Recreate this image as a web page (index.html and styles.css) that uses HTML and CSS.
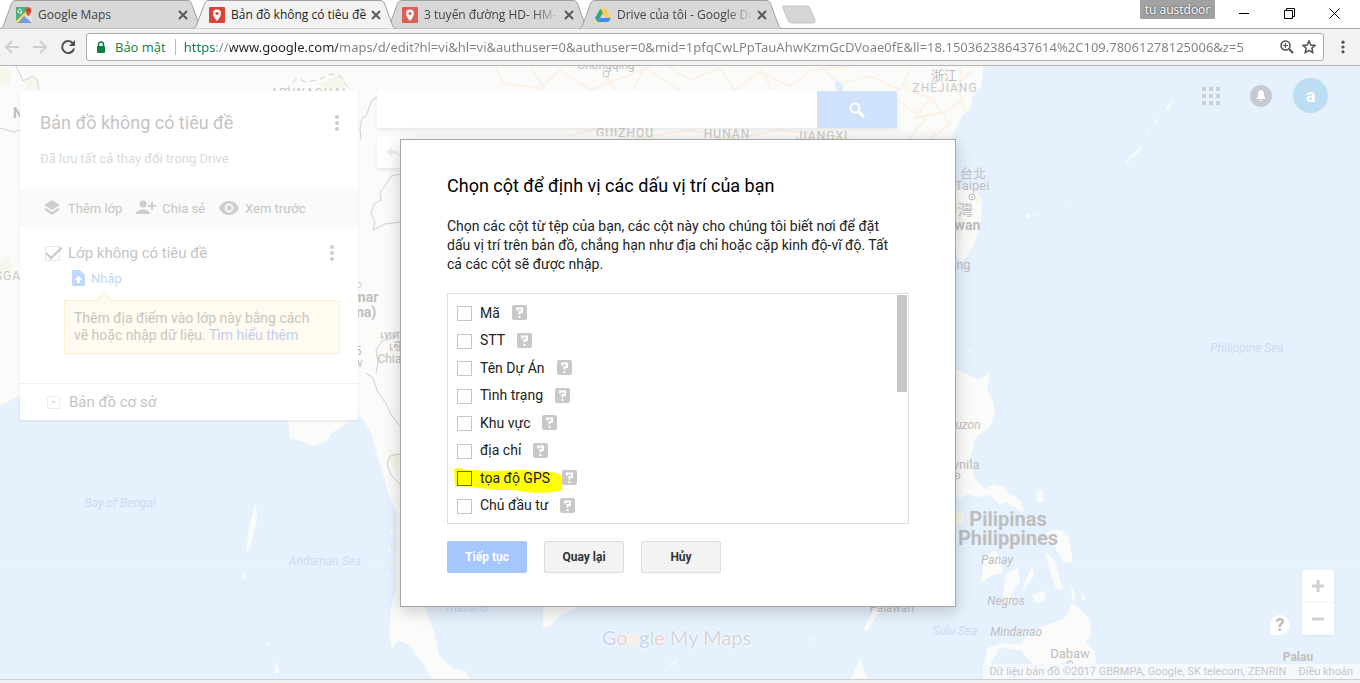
FILE: index.html
```html
<!DOCTYPE html>
<html lang="vi">

<head>
	<meta charset="utf-8">
	<title>Bản đồ không có tiêu đề</title>
	<link rel="stylesheet" href="styles.css">
</head>

<body>
	<svg class="defs" aria-hidden="true">
		<symbol id="i-tab" viewBox="0 0 203 29" preserveAspectRatio="none">
			<path d="M0 28.500 C2 28 3 27 4 24 L11 5 C12 2 13 .5 16 .5 H187 C190 .5 191 2 192 5 L199 24 C200 27 201 28 203 28.500" />
		</symbol>
		<symbol id="i-close" viewBox="0 0 10 10">
			<path d="M1 1 L9 9 M9 1 L1 9" fill="none" stroke="#5a5a5a" stroke-width="2" />
		</symbol>
		<symbol id="i-pin" viewBox="0 0 16 16">
			<rect width="16" height="16" rx="1" fill="#db4437" />
			<path d="M8 2.500 a4 4 0 0 0 -4 4 c0 3 4 7.500 4 7.500 s4 -4.500 4 -7.500 a4 4 0 0 0 -4 -4z" fill="#fff" />
			<circle cx="8" cy="6.500" r="1.500" fill="#db4437" />
		</symbol>
		<symbol id="i-dots" viewBox="0 0 6 20">
			<circle cx="3" cy="4" r="2" /><circle cx="3" cy="10" r="2" /><circle cx="3" cy="16" r="2" />
		</symbol>
		<symbol id="i-help" viewBox="0 0 15 15">
			<rect width="15" height="15" rx="2" fill="#c8c8c8" />
			<path d="M5 5.500 V3.500 H10 V7 H7.500 V9.500 M7.500 11 V13" fill="none" stroke="#fff" stroke-width="2" />
		</symbol>
	</svg>

	<header class="browser">
		<div class="tabstrip">
			<div class="tab">
				<svg class="tab_bg"><use href="#i-tab" /></svg>
				<svg class="favicon" viewBox="0 0 16 16">
					<rect width="16" height="16" rx="1" fill="#4caf78" />
					<path d="M8 8 L16 0 V16 H11z" fill="#e3e3e3" />
					<path d="M0 14 L14 0 H16 V2 L2 16 H0z" fill="#f5d36b" />
					<path d="M8 9 L16 16 H2z" fill="#6f9bf0" />
					<path d="M12.500 .5 a3 3 0 0 0 -3 3 c0 2.500 3 6 3 6 s3 -3.500 3 -6 a3 3 0 0 0 -3 -3z" fill="#d9534a" />
					<circle cx="12.500" cy="3.500" r="1" fill="#8c2a22" />
					<path d="M5.500 3 a2 2 0 1 0 .5 1.500 H4.500" fill="none" stroke="#fff" stroke-width="1" />
				</svg>
				<span class="tab_title">Google Maps</span>
				<button class="tab_close" aria-label="Đóng"><svg><use href="#i-close" /></svg></button>
			</div>
			<div class="tab active">
				<svg class="tab_bg"><use href="#i-tab" /></svg>
				<svg class="favicon"><use href="#i-pin" /></svg>
				<span class="tab_title">Bản đồ không có tiêu đề</span>
				<button class="tab_close" aria-label="Đóng"><svg><use href="#i-close" /></svg></button>
			</div>
			<div class="tab">
				<svg class="tab_bg"><use href="#i-tab" /></svg>
				<svg class="favicon pale"><use href="#i-pin" /></svg>
				<span class="tab_title fade">3 tuyến đường HD- HM- HN</span>
				<button class="tab_close" aria-label="Đóng"><svg><use href="#i-close" /></svg></button>
			</div>
			<div class="tab">
				<svg class="tab_bg"><use href="#i-tab" /></svg>
				<svg class="favicon" viewBox="0 0 16 16">
					<path d="M5.500 1.500 L0 11 L2.700 15 L8 5.800z" fill="#3aa76d" />
					<path d="M5.500 1.500 H10.500 L16 11 H10.700z" fill="#fbcf4a" />
					<path d="M5.300 11 H16 L13.300 15 H2.700z" fill="#4688f4" />
				</svg>
				<span class="tab_title fade">Drive của tôi - Google Drive</span>
				<button class="tab_close" aria-label="Đóng"><svg><use href="#i-close" /></svg></button>
			</div>
			<button class="new_tab" aria-label="Thẻ mới">
				<svg viewBox="0 0 36 19"><path d="M3 1 H26 Q28 1 29 3 L34 15 Q35 18 32 18 H11 Q8 18 7 15 L2 3 Q1 1 3 1z" fill="#d6d6d6" stroke="#c4c4c4" /></svg>
			</button>
			<div class="window_buttons">
				<span class="user_name">tu austdoor</span>
				<button aria-label="Thu nhỏ"><svg viewBox="0 0 11 11"><path d="M0 5.500 H10" /></svg></button>
				<button aria-label="Khôi phục"><svg viewBox="0 0 11 11"><path d="M.5 2.500 H8.500 V10.500 H.5z M2.500 2.500 V.5 H10.500 V8.500 H8.500" /></svg></button>
				<button aria-label="Đóng cửa sổ"><svg viewBox="0 0 11 11"><path d="M.5 .5 L10.500 10.500 M10.500 .5 L.5 10.500" /></svg></button>
			</div>
		</div>

		<div class="toolbar">
			<button class="nav_btn" aria-label="Quay lại trang trước"><svg viewBox="0 0 16 16"><path d="M15 8 H2 M8 2 L2 8 L8 14" fill="none" stroke="#cfcfcf" stroke-width="2" /></svg></button>
			<button class="nav_btn" aria-label="Trang sau"><svg viewBox="0 0 16 16"><path d="M1 8 H14 M8 2 L14 8 L8 14" fill="none" stroke="#cfcfcf" stroke-width="2" /></svg></button>
			<button class="nav_btn" aria-label="Tải lại"><svg viewBox="0 0 16 16"><path d="M13 4.500 A6 6 0 1 0 14 9.500" fill="none" stroke="#505050" stroke-width="2" /><path d="M15 1 V7 H9z" fill="#505050" /></svg></button>
			<div class="omnibox">
				<svg class="lock" viewBox="0 0 10 13"><path d="M2.500 6 V3.500 a2.500 2.500 0 0 1 5 0 V6" fill="none" stroke="#0b8043" stroke-width="1.500" /><rect x="1" y="5" width="8" height="7" rx="1" fill="#0b8043" /></svg>
				<label class="secure" for="url">Bảo mật</label>
				<input class="url" id="url" type="text" value="https://www.google.com/maps/d/edit?hl=vi&amp;hl=vi&amp;authuser=0&amp;authuser=0&amp;mid=1pfqCwLPpTauAhwKzmGcDVoae0fE&amp;ll=18.150362386437614%2C109.78061278125006&amp;z=5">
				<button class="box_btn" aria-label="Thu phóng"><svg viewBox="0 0 14 14"><g fill="none" stroke="#505050"><circle cx="5.500" cy="5.500" r="4.500" stroke-width="1.500" /><path d="M9 9 L13 13" stroke-width="2" /><path d="M3 5.500 H8 M5.500 3 V8" /></g></svg></button>
				<button class="box_btn" aria-label="Đánh dấu"><svg viewBox="0 0 14 14"><path d="M7 1 L8.800 5 L13 5.400 L9.900 8.300 L10.800 12.600 L7 10.400 L3.200 12.600 L4.100 8.300 L1 5.400 L5.200 5z" fill="none" stroke="#505050" stroke-width="1.500" /></svg></button>
			</div>
			<button class="menu_btn" aria-label="Trình đơn"><svg fill="#505050"><use href="#i-dots" /></svg></button>
		</div>
	</header>

	<main class="map">
		<svg class="canvas" viewBox="0 66 1360 613" preserveAspectRatio="xMidYMid slice">
			<!-- land -->
			<g class="land">
				<path d="M0 66 H983 L981 88 L973 96 L971 108 L962 116 L957 128 L950 140 L900 240 L700 300 L730 420 L640 560 L577 608 L562 614 L549 627 L543 628 L543 600 L480 560 L420 540 L424 600 L428 616 L434 632 L439 655 L453 668 L467 672 L470 679 H432 L424 665 L409 645 L398 640 L392 649 L389 634 L391 607 L396 590 L397 512 L388 494 L383 474 L376 452 L371 432 L363 420 L358 414 L345 424 L333 432 L325 442 L313 446 L303 442 L290 438 L288 420 L200 400 L100 380 L40 388 L20 396 L0 405z" />
				<path d="M956 190 Q972 184 981 198 Q984 216 977 236 Q972 252 962 262 L950 250z" />
				<path d="M945 368 L960 371 L978 379 L990 374 L987 388 L993 402 L995 413 L989 428 L977 436 L970 448 L969 462 L975 479 L985 489 L993 484 L1004 487 L1010 494 L1020 500 L1024 512 L1015 508 L1006 502 L1000 505 L989 495 L978 497 L967 494 L960 500 L950 490z" />
				<path d="M1036 492 L1043 490 L1043 502 L1037 502z M1045 533 Q1060 526 1068 535 L1071 551 L1073 563 L1064 562 L1057 551z M1045 552 L1055 560 L1060 580 L1063 590 L1056 588 L1050 572z M985 556 L995 550 L1002 564 L1003 572 L991 576 L981 583z M1006 574 L1018 568 L1020 582 L1012 592 L1009 606 L1003 596z M1032 566 L1034 576 L1022 592 L1024 584z M1031 595 L1044 591 L1046 600 L1037 604z M1071 584 L1076 596 L1072 602z M1082 592 L1086 600 L1082 600z" />
				<path d="M1072 603 L1082 611 L1090 620 L1091 634 L1086 642 L1095 652 L1097 679 H1080 L1070 660 L1040 672 L1020 650 L1000 648 L990 664 L984 670 L987 648 L1002 643 L1020 644 L1030 632 L1046 625 L1064 619z" />
				<path d="M886 607 L877 616 L866 632 L864 628 L873 611z M851 679 L860 658 L867 679z M256 502 L257 520 L251 545 L246 553 L249 525z M244 571 L246 579 L241 579z M275 662 L280 671 L275 674z M268 641 L271 645 L266 646z" />
				<path d="M1168 105 L1173 101 L1170 108 L1164 112z M1156 117 L1158 124 L1155 122z M1138 149 L1142 146 L1139 154 L1130 158 L1127 167 L1126 161z M1026 214 l4 1 l-2 3 l-3 -1z M1036 213 l3 1 l-2 2z M1066 203 l2 2 l-3 1z M1147 131 l2 2 l-2 1z M968 350 l3 1 l-2 2z" />
				<path d="M391 528 l2 8 l-3 -2z M389 546 l2 6 l-3 1z M388 572 l2 4 l-2 1z M670 664 l9 -5 l-3 4 l-5 3z M811 639 l4 -1 l-2 3z M955 450 l7 1 l4 -8 l8 2 l-3 10 l-10 6z" />
			</g>
			<!-- forest tint -->
			<g fill="#f3f8ea">
				<path d="M0 66 L12 70 L10 84 L0 88z M26 80 L36 78 L38 90 L26 90z M318 84 L342 74 L346 88 L326 90z M0 262 L8 256 L14 270 L0 276z M956 510 l8 2 l0 12 l-10 2z M390 450 l9 6 v20 l-8 -10z M956 200 q12 14 2 50z" />
			</g>
			<!-- roads -->
			<g class="roads">
				<path d="M495 66 L505 84 L540 88 L560 70 L590 90 L622 78 L650 66 M530 66 L545 90 M600 66 L616 90 M632 90 L645 68 L680 90 M668 66 L690 80 L720 68 L735 90 L760 72 L790 86 L812 70 L850 66 M760 66 L772 90 M820 66 L840 84 L870 76 L900 90 L912 66 M905 88 L930 98 L915 118 L945 112 L962 100 M897 100 L925 120 L910 138 M930 96 L950 124 L930 139 M560 138 L600 128 L640 138 L690 130 L730 139 L780 130 L850 138 M940 66 L955 88 L970 72" />
				<path d="M962 66 Q956 90 966 112 M968 196 Q976 192 978 204" />
			</g>
			<!-- country and state borders -->
			<g class="borders">
				<path d="M16 66 L23 81 L33 76 L37 80 L39 90 M0 128 L14 132 L20 130 M377 97 L372 100 L366 116 L362 118 L360 128 L361 140 M400 174 L391 176 L385 186 L380 192 L381 200 L374 204 L371 214 L375 222 L373 230 L385 224 L400 222 M366 373 L373 378 L377 390 L386 404 L392 416 L400 426 M376 373 L378 362 L376 350 L382 341 L392 338 M400 454 L390 456 L387 464 L391 475 L400 484" />
				<path d="M286 90 L297 78 L305 82 L318 80 L330 74 L340 76 L350 90" stroke-dasharray="6 4" />
			</g>
			<path d="M0 563.500 H1360" stroke="#f0f4fa" />
			<path d="M836 80 l8 6 l-3 8 l-6 -6z" fill="#deebfb" />
			<!-- labels -->
			<g class="labels">
				<text x="944" y="80" font-size="13">浙江</text>
				<text class="prov" x="945" y="92">ZHEJIANG</text>
				<text class="prov" x="625" y="137">GUIZHOU</text>
				<text class="prov" x="727" y="138">HUNAN</text>
				<text class="prov" x="822" y="140">JIANGXI</text>
				<text x="606" y="69" font-size="12">Chongqing</text>
				<circle cx="606" cy="74" r="3" fill="none" stroke="#c4c4c4" />
				<text class="prov" x="310" y="97">ARUNACHAL</text>
				<text class="country" x="18" y="118">N</text>
				<text class="prov" x="8" y="280">SGA</text>
				<text class="country" x="362" y="302">nmar</text>
				<text class="country" x="364" y="317">ma)</text>
				<text x="359" y="288" font-size="13">ဝ</text>
				<text x="358" y="355" font-size="12">5</text>
				<text x="358" y="367" font-size="12">w</text>
				<text x="390" y="339" font-size="12">เทศ</text>
				<text x="398" y="351" font-size="12">เชีย</text>
				<text x="396" y="363" font-size="12">Chiang</text>
				<text x="973" y="178" font-size="13">台北</text>
				<text x="972" y="190" font-size="13">Taipei</text>
				<circle cx="972" cy="197" r="3" fill="#fff" stroke="#b8b8b8" />
				<circle cx="972" cy="197" r="1" />
				<text x="958" y="215" font-size="15">台灣</text>
				<text class="country" x="958" y="230">Taiwan</text>
				<text x="940" y="269" font-size="13">Kaohsiung</text>
				<text class="island" x="965" y="429">Luzon</text>
				<text x="957" y="469" font-size="13">Maynila</text>
				<circle cx="957" cy="476" r="3" fill="#fff" stroke="#b8b8b8" />
				<circle cx="957" cy="476" r="1" />
				<text class="big" x="1008" y="526">Pilipinas</text>
				<text class="big" x="1008" y="545">Philippines</text>
				<text class="island" x="997" y="564">Panay</text>
				<text class="island" x="1006" y="605">Negros</text>
				<text class="island" x="1016" y="636">Mindanao</text>
				<text class="island" x="892" y="612">Palawan</text>
				<text x="1070" y="658" font-size="13">Dabaw</text>
				<circle cx="1070" cy="664" r="3" fill="none" stroke="#c4c4c4" />
				<text class="palau" x="1298" y="661">Palau</text>
				<text class="sea" x="1247" y="352">Philippine Sea</text>
				<text class="sea" x="955" y="635">Sulu Sea</text>
				<text class="sea" x="120" y="507">Bay of Bengal</text>
				<text class="sea" x="325" y="565">Andaman Sea</text>
				<text class="sea" x="466" y="612">Thailand</text>
			</g>
		</svg>

		<div class="map_ui">
			<section class="panel">
				<div class="panel_head">
					<h1>Bản đồ không có tiêu đề</h1>
					<button class="dots" aria-label="Tùy chọn bản đồ"><svg><use href="#i-dots" /></svg></button>
				</div>
				<p class="saved">Đã lưu tất cả thay đổi trong Drive</p>
				<div class="actions">
					<button><svg viewBox="0 0 20 16"><path d="M10 0 L18 5 L10 10 L2 5z M4 8 L10 12 L16 8 L18 9.500 L10 15 L2 9.500z" /></svg>Thêm lớp</button>
					<button><svg viewBox="0 0 20 16"><circle cx="7" cy="4" r="3.500" /><path d="M0 14 C0 8 14 8 14 14z M15 2 H17 V5 H20 V7 H17 V10 H15 V7 H12 V5 H15z" /></svg>Chia sẻ</button>
					<button><svg viewBox="0 0 20 16"><path fill-rule="evenodd" d="M10 1 C5 1 1.500 4.500 0 8 C1.500 11.500 5 15 10 15 C15 15 18.500 11.500 20 8 C18.500 4.500 15 1 10 1z M10 3.500 a4.500 4.500 0 1 1 0 9 a4.500 4.500 0 1 1 0 -9z" /><circle cx="10" cy="8" r="2.500" /></svg>Xem trước</button>
				</div>
				<div class="layer">
					<div class="layer_head">
						<input type="checkbox" id="layer1" class="layer_cb" checked>
						<label for="layer1">Lớp không có tiêu đề</label>
						<button class="dots" aria-label="Tùy chọn lớp"><svg><use href="#i-dots" /></svg></button>
					</div>
					<button class="import"><svg viewBox="0 0 13 16"><path d="M1 0 H8 L13 5 V16 H1 Q0 16 0 15 V1 Q0 0 1 0z" fill="#c3d9fb" /><path d="M6.500 6 L10.500 10 H8 V13 H5 V10 H2.500z" fill="#fff" /></svg>Nhập</button>
					<div class="tip">Thêm địa điểm vào lớp này bằng cách vẽ hoặc nhập dữ liệu. <a href="#">Tìm hiểu thêm</a></div>
				</div>
				<button class="basemap"><svg viewBox="0 0 13 13"><rect x=".5" y=".5" width="12" height="12" rx="1" fill="none" stroke="#ececec" /><path d="M4 5 H9 L6.500 8z" fill="#dcdcdc" /></svg>Bản đồ cơ sở</button>
			</section>

			<div class="middle">
				<form class="search">
					<input type="text" aria-label="Tìm kiếm">
					<button type="button" aria-label="Tìm"><svg viewBox="0 0 16 16"><circle cx="6" cy="6" r="4.500" fill="none" stroke="#fff" stroke-width="2" /><path d="M9 9 L15 15" stroke="#fff" stroke-width="3" /></svg></button>
				</form>
				<div class="edit_bar">
					<button aria-label="Hoàn tác"><svg viewBox="0 0 16 16"><path d="M7 3 L1 8 L7 13 V10 Q12 9 15 13 Q14 6 7 6z" fill="#efefef" /></svg></button>
				</div>
			</div>

			<div class="account">
				<button aria-label="Ứng dụng"><svg width="18" height="18" viewBox="0 0 18 18"><path d="M0 0h4v4h-4z M7 0h4v4h-4z M14 0h4v4h-4z M0 7h4v4h-4z M7 7h4v4h-4z M14 7h4v4h-4z M0 14h4v4h-4z M7 14h4v4h-4z M14 14h4v4h-4z" fill="#c9ced6" /></svg></button>
				<button aria-label="Thông báo"><svg width="22" height="22" viewBox="0 0 22 22"><circle cx="11" cy="11" r="11" fill="#c6cad1" /><path d="M11 5 C8 5.500 8 8 8 11 L6.500 14 H15.500 L14 11 C14 8 14 5.500 11 5z M9.500 15 H12.500 Q11 17.500 9.500 15z" fill="#fff" /></svg></button>
				<button class="avatar">a</button>
			</div>
		</div>

		<div class="map_logo"><span class="g1">G</span><span class="g2">o</span><span class="g3">o</span><span class="g1">g</span><span class="g4">l</span><span class="g2">e</span> My Maps</div>

		<div class="map_controls">
			<button class="help" aria-label="Trợ giúp">?</button>
			<div class="zoom">
				<button aria-label="Phóng to"><svg viewBox="0 0 12 12"><path d="M6 0 V12 M0 6 H12" /></svg></button>
				<button aria-label="Thu nhỏ bản đồ"><svg viewBox="0 0 12 12"><path d="M0 6 H12" /></svg></button>
			</div>
		</div>
		<div class="attribution"><span>Dữ liệu bản đồ ©2017 GBRMPA, Google, SK telecom, ZENRIN</span><a href="#">Điều khoản</a></div>

		<div class="overlay">
			<form class="dialog" role="dialog" aria-labelledby="dlg_title">
				<h2 id="dlg_title">Chọn cột để định vị các dấu vị trí của bạn</h2>
				<p>Chọn các cột từ tệp của bạn, các cột này cho chúng tôi biết nơi để đặt dấu vị trí trên bản đồ, chẳng hạn như địa chỉ hoặc cặp kinh độ-vĩ độ. Tất cả các cột sẽ được nhập.</p>
				<div class="columns">
					<div class="row"><input type="checkbox" id="c1"><label for="c1">Mã</label><svg class="q"><use href="#i-help" /></svg></div>
					<div class="row"><input type="checkbox" id="c2"><label for="c2">STT</label><svg class="q"><use href="#i-help" /></svg></div>
					<div class="row"><input type="checkbox" id="c3"><label for="c3">Tên Dự Án</label><svg class="q"><use href="#i-help" /></svg></div>
					<div class="row"><input type="checkbox" id="c4"><label for="c4">Tình trạng</label><svg class="q"><use href="#i-help" /></svg></div>
					<div class="row"><input type="checkbox" id="c5"><label for="c5">Khu vực</label><svg class="q"><use href="#i-help" /></svg></div>
					<div class="row"><input type="checkbox" id="c6"><label for="c6">địa chỉ</label><svg class="q"><use href="#i-help" /></svg></div>
					<div class="row marked">
						<svg class="marker" viewBox="0 0 108 26"><path d="M0 1 L6 0 L12 2 L40 3 L70 2 L98 4 L106 6 L108 10 V22 L100 24 L84 25 L72 24 L60 22 L44 22 L24 20 L8 18 L1 19z" fill="#ff0" /></svg>
						<input type="checkbox" id="c7"><label for="c7">tọa độ GPS</label><svg class="q"><use href="#i-help" /></svg>
					</div>
					<div class="row"><input type="checkbox" id="c8"><label for="c8">Chủ đầu tư</label><svg class="q"><use href="#i-help" /></svg></div>
					<div class="thumb"></div>
				</div>
				<div class="buttons">
					<button type="button" class="primary">Tiếp tục</button>
					<button type="button">Quay lại</button>
					<button type="button">Hủy</button>
				</div>
			</form>
		</div>
	</main>
</body>

</html>
```

FILE: styles.css
```css
* {
	box-sizing: border-box;
	margin: 0;
	padding: 0;
}

body {
	display: flex;
	flex-direction: column;
	height: 100vh;
	overflow: hidden;
	background: #f0f1f2;
	font-family: Roboto, "Liberation Sans", "Noto Sans CJK TC", sans-serif;
	font-size: 14px;
}

button {
	border: none;
	background: none;
	font-family: inherit;
}

a {
	text-decoration: none;
}

svg {
	display: block;
}

.defs {
	position: absolute;
	width: 0;
	height: 0;
}

/* browser */
.browser {
	font-family: "Open Sans", "Noto Sans", sans-serif;
	background: #f2f2f2;
	border-bottom: 1px solid #b4b4b4;
}

.tabstrip {
	display: flex;
	height: 29px;
	background: linear-gradient(#a9a9a9, #a9a9a9) bottom / 100% 1px no-repeat #fff;
}

.tab {
	position: relative;
	display: flex;
	align-items: center;
	width: 203px;
	height: 29px;
	padding: 0 15px 0 16px;
	font-size: 12px;
	color: #444;
}

.tab + .tab {
	margin-left: -10px;
}

.tab_bg {
	position: absolute;
	left: 0;
	top: 0;
	width: 100%;
	height: 100%;
	fill: #d8d8d8;
	stroke: #a0a0a0;
}

.active {
	z-index: 1;
	color: #222;
}

.active .tab_bg {
	fill: #f2f2f2;
}

.favicon {
	position: relative;
	width: 16px;
	height: 16px;
	flex: none;
}

.pale {
	opacity: 0.8;
}

.tab_title {
	position: relative;
	flex: 1;
	margin: 0 4px 0 6px;
	overflow: hidden;
	white-space: nowrap;
}

.fade {
	-webkit-mask-image: linear-gradient(90deg, #000 80%, transparent);
	mask-image: linear-gradient(90deg, #000 80%, transparent);
}

.tab_close {
	position: relative;
}

.tab_close svg {
	width: 10px;
	height: 10px;
}

.new_tab {
	align-self: center;
	margin-left: -1px;
}

.new_tab svg {
	width: 36px;
	height: 19px;
}

.window_buttons {
	display: flex;
	align-items: center;
	height: 26px;
	margin-left: auto;
	padding-right: 20px;
	gap: 34px;
}

.window_buttons svg {
	width: 11px;
	height: 11px;
	fill: none;
	stroke: #000;
}

.user_name {
	align-self: flex-start;
	width: 75px;
	margin-right: -10px;
	background: #a2a2a2;
	color: #fff;
	font-size: 12px;
	line-height: 19px;
	text-align: center;
	text-shadow: 0 0 2px #333;
}

.toolbar {
	display: flex;
	align-items: center;
	height: 36px;
	padding: 0 14px 0 4px;
}

.nav_btn {
	width: 28px;
}

.nav_btn svg {
	width: 16px;
	height: 16px;
}

.omnibox {
	display: flex;
	align-items: center;
	flex: 1;
	height: 28px;
	margin: 0 16px 0 -2px;
	padding: 0 7px 0 9px;
	background: #fff;
	border: 1px solid #adadad;
	border-radius: 3px;
}

.lock {
	width: 10px;
	height: 13px;
}

.secure {
	margin-left: 9px;
	padding-right: 9px;
	border-right: 1px solid #bbb;
	color: #0b8043;
	font-size: 13px;
	line-height: 16px;
}

/* scheme green, host black, the rest grey */
.url {
	flex: 1;
	min-width: 0;
	margin: 0 6px 0 8px;
	border: none;
	outline: none;
	font-family: "Noto Sans", sans-serif;
	font-size: 13px;
	color: transparent;
	background: linear-gradient(90deg, #0b8043 32px, #888 32px, #888 46px, #222 46px, #222 154px, #808080 154px);
	-webkit-background-clip: text;
	background-clip: text;
}

.box_btn {
	margin-left: 8px;
}

.url + .box_btn {
	margin-left: 0;
}

.box_btn svg {
	width: 14px;
	height: 14px;
}

.menu_btn svg {
	width: 6px;
	height: 16px;
}

/* map */
.map {
	position: relative;
	flex: 1;
	margin-bottom: 3px;
	border-bottom: 1px solid #ccd0d6;
	background: #e6f1fe;
	overflow: hidden;
}

.canvas {
	position: absolute;
	width: 100%;
	height: 100%;
}

.land {
	fill: #fbfbf9;
}

.roads {
	fill: none;
	stroke: #fcf1e4;
	stroke-width: 2;
}

.borders {
	fill: none;
	stroke: #cfcfcf;
}

.labels {
	fill: #bebebe;
	text-anchor: middle;
	font-size: 12px;
}

.prov {
	letter-spacing: 1px;
	fill: #c8c8c8;
}

.country {
	font-weight: bold;
	font-size: 14px;
}

.palau {
	font-weight: bold;
}

.big {
	font-weight: bold;
	font-size: 20px;
}

.island {
	font-style: italic;
}

.sea {
	font-style: italic;
	fill: #cddaf0;
}

.map_ui {
	position: absolute;
	left: 0;
	right: 0;
	top: 0;
	display: flex;
	align-items: flex-start;
	padding: 25px 32px 0 20px;
}

.panel {
	width: 338px;
	background: #fff;
	border-radius: 2px;
	box-shadow: 0 1px 3px rgba(0, 0, 0, 0.08);
	color: #c4c4c4;
}

.dots svg {
	width: 6px;
	height: 20px;
	fill: #cdcdcd;
}

.panel_head {
	display: flex;
	justify-content: space-between;
	align-items: center;
	padding: 20px 18px 0 20px;
}

.panel_head h1 {
	font-size: 18px;
	font-weight: normal;
	line-height: 24px;
}

.saved {
	padding: 14px 20px 19px;
	font-size: 13px;
	line-height: 20px;
	color: #dadada;
}

.actions {
	display: flex;
	align-items: center;
	gap: 14px;
	height: 40px;
	padding: 0 22px;
	background: #fafafa;
}

.actions button {
	display: flex;
	align-items: center;
	gap: 6px;
	font-size: 13px;
	color: #c4c4c4;
}

.actions svg {
	width: 20px;
	height: 16px;
	fill: #cdcdcd;
}

.layer {
	padding: 15px 18px 29px 25px;
	border-bottom: 1px solid #f1f1f1;
}

.layer_head {
	display: flex;
	align-items: center;
	gap: 8px;
	height: 20px;
	padding-right: 5px;
	font-size: 15px;
}

.layer_head label {
	flex: 1;
}

.layer_cb {
	appearance: none;
	width: 15px;
	height: 15px;
	border: 1px solid #e6e6e6;
}

.layer_cb:checked::before {
	content: "";
	display: block;
	width: 14px;
	height: 6px;
	border: solid #c8c8c8;
	border-width: 0 0 2px 2px;
	transform: rotate(-45deg);
}

.import {
	display: flex;
	align-items: center;
	gap: 6px;
	margin: 7px 0 0 27px;
	font-size: 13px;
	color: #c3d6f8;
}

.import svg {
	width: 13px;
	height: 16px;
}

.tip {
	position: relative;
	margin: 14px 0 0 19px;
	padding: 9px 20px 9px 9px;
	border: 1px solid #fbefd0;
	background: #fffbf0;
	color: #c9c6bf;
	line-height: 17px;
}

.tip::before {
	content: "";
	position: absolute;
	left: 34px;
	top: -6px;
	width: 10px;
	height: 10px;
	border: solid #fbefd0;
	border-width: 1px 0 0 1px;
	background: #fffbf0;
	transform: rotate(45deg);
}

.tip a {
	color: #c3cdf0;
}

.basemap {
	display: flex;
	align-items: center;
	gap: 9px;
	height: 36px;
	padding-left: 27px;
	font-size: 15px;
	color: #c4c4c4;
}

.basemap svg {
	width: 13px;
	height: 13px;
}

.middle {
	flex: 0 1 520px;
	margin-left: 19px;
}

.search {
	display: flex;
	height: 37px;
	box-shadow: 0 2px 4px rgba(0, 0, 0, 0.08);
}

.search input {
	flex: 1;
	min-width: 0;
	border: none;
	background: #fff;
}

.search button {
	display: flex;
	align-items: center;
	justify-content: center;
	width: 80px;
	background: #d0e1fc;
	border-radius: 0 2px 2px 0;
}

.search svg {
	width: 16px;
	height: 16px;
}

.edit_bar {
	display: flex;
	width: 240px;
	height: 32px;
	margin-top: 8px;
	padding-left: 8px;
	background: #fff;
	box-shadow: 0 2px 4px rgba(0, 0, 0, 0.08);
}

.edit_bar svg {
	width: 16px;
	height: 16px;
}

.account {
	display: flex;
	align-items: center;
	gap: 30px;
	margin: -13px 0 0 auto;
}

.avatar {
	width: 35px;
	height: 35px;
	margin-left: -9px;
	border-radius: 50%;
	background: #bbdef2;
	color: #fff;
	font-size: 18px;
	font-weight: bold;
}

.map_logo {
	position: absolute;
	left: 0;
	right: 7px;
	bottom: 29px;
	text-align: center;
	font-family: Lato, sans-serif;
	font-size: 20px;
	line-height: 26px;
	color: #d2d5da;
	text-shadow: 0 0 2px #fff, 0 0 2px #fff;
}

.g1 { color: #c3d3f5; }
.g2 { color: #f6ccc9; }
.g3 { color: #fbebc0; }
.g4 { color: #c3e3cd; }

.map_controls {
	position: absolute;
	right: 26px;
	bottom: 44px;
	display: flex;
	align-items: flex-end;
	gap: 12px;
}

.help {
	width: 20px;
	height: 20px;
	border-radius: 10px 10px 10px 2px;
	background: #fff;
	color: #bdb8b8;
	font-size: 18px;
	font-weight: bold;
	line-height: 20px;
}

.zoom {
	width: 32px;
	background: #fff;
	border-radius: 2px;
	box-shadow: 0 1px 3px rgba(0, 0, 0, 0.06);
}

.zoom button {
	display: flex;
	align-items: center;
	justify-content: center;
	width: 32px;
	height: 32px;
}

.zoom button + button {
	height: 33px;
	border-top: 1px solid #f2f2f2;
}

.zoom svg {
	width: 12px;
	height: 12px;
	stroke: #d0d0d0;
	stroke-width: 3;
}

.attribution {
	position: absolute;
	right: 0;
	bottom: 0;
	display: flex;
	gap: 12px;
	padding: 0 7px 0 6px;
	background: #f5f9fe;
	font-size: 11px;
	line-height: 15px;
	color: #c6c6c6;
}

.attribution a {
	color: #c6c6c6;
}

/* dialog */
.overlay {
	position: absolute;
	left: 0;
	right: 4px;
	top: 0;
	bottom: 0;
	display: flex;
	align-items: center;
	justify-content: center;
}

.dialog {
	width: 556px;
	padding: 34px 46px 33px;
	border: 1px solid #a6a6a6;
	background: #fff;
	box-shadow: 0 4px 16px rgba(0, 0, 0, 0.2);
	color: #222;
}

.dialog h2 {
	font-size: 18px;
	font-weight: normal;
	line-height: 24px;
	color: #000;
}

.dialog p {
	margin: 19px 0;
	padding-right: 12px;
	line-height: 19px;
}

.columns {
	position: relative;
	display: flex;
	flex-direction: column;
	justify-content: space-between;
	height: 231px;
	padding: 9px 9px 7px;
	border: 1px solid #ddd;
}

.row {
	position: relative;
	display: flex;
	align-items: center;
	height: 20px;
}

.row input {
	appearance: none;
	width: 15px;
	height: 15px;
	margin-top: 2px;
	border: 1px solid #c6c6c6;
}

.row label {
	position: relative;
	margin: 0 12px 0 8px;
}

.q {
	position: relative;
	width: 15px;
	height: 15px;
}

.marked input {
	position: relative;
	border-color: #6e6e00;
}

.marker {
	position: absolute;
	left: -3px;
	top: 0;
	width: 108px;
	height: 26px;
}

.thumb {
	position: absolute;
	right: 1px;
	top: 1px;
	width: 10px;
	height: 97px;
	background: #c8c8c8;
}

.buttons {
	display: flex;
	gap: 17px;
	margin-top: 17px;
}

.buttons button {
	min-width: 80px;
	height: 32px;
	border: 1px solid #dcdcdc;
	border-radius: 2px;
	background: #f3f3f3;
	color: #333;
	font-size: 12px;
	font-weight: bold;
}

.buttons .primary {
	border-color: #a6c6ff;
	background: #a6c6ff;
	color: #fff;
}
```
